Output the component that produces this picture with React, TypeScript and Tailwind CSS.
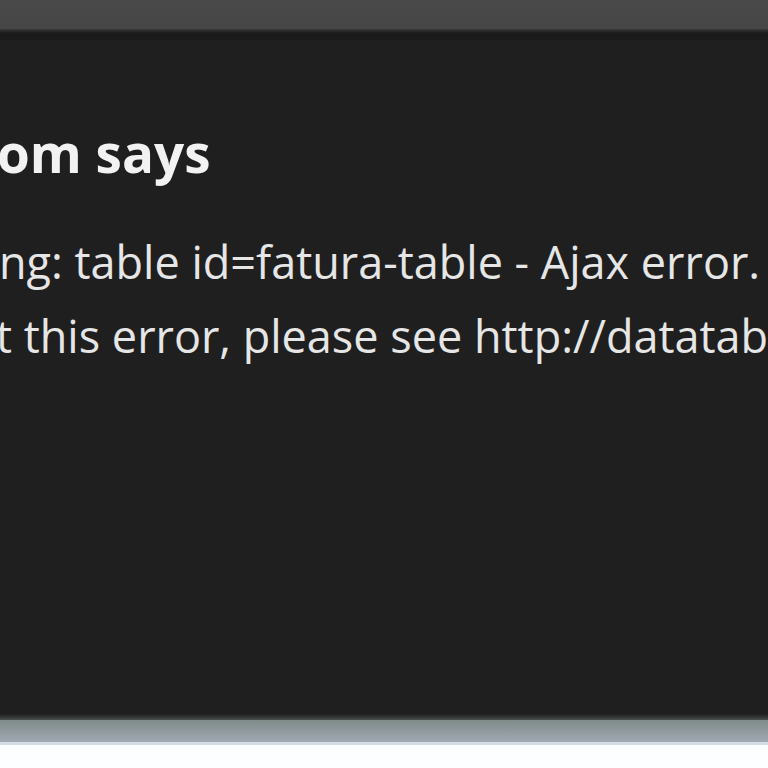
const font = { fontFamily: '"Open Sans", "Noto Sans", sans-serif' };

const App = () => {
  return (
    <div className="w-[768px] h-[768px] flex flex-col bg-[#fcfeff] overflow-hidden" style={font}>
      <div className="h-[29px] shrink-0 bg-gradient-to-b from-[#4a4a4a] to-[#464646]" />
      <div className="h-[4px] shrink-0 bg-gradient-to-b from-[#3a3a3a] to-[#1b1b1b]" />
      <div className="flex-1 bg-[#1f1f1f] border-t-[7px] border-[#1b1b1b] overflow-hidden">
        <h1 className="mt-[83px] -ml-[3px] text-[53px] leading-[60px] font-bold text-[#f2f2f2] whitespace-nowrap">
          om says
        </h1>
        <p className="mt-[42px] -ml-[1px] text-[45px] leading-[74px] text-[#e6e6e6] whitespace-nowrap">
          ng: table id=fatura-table - Ajax error.
        </p>
        <p className="-ml-[4px] text-[45px] leading-[74px] text-[#e6e6e6] whitespace-nowrap">
          t this error, please see http://datatables.net/tn/7
        </p>
      </div>
      <div className="h-[6px] shrink-0 bg-gradient-to-b from-[#1f1f1f] to-[#4a4f4f]" />
      <div className="h-[22px] shrink-0 bg-gradient-to-b from-[#7f8a89] to-[#a0a9b4]" />
      <div className="h-[3px] shrink-0 bg-[#d3dbe3]" />
      <div className="h-[23px] shrink-0" />
    </div>
  );
};

export default App;
